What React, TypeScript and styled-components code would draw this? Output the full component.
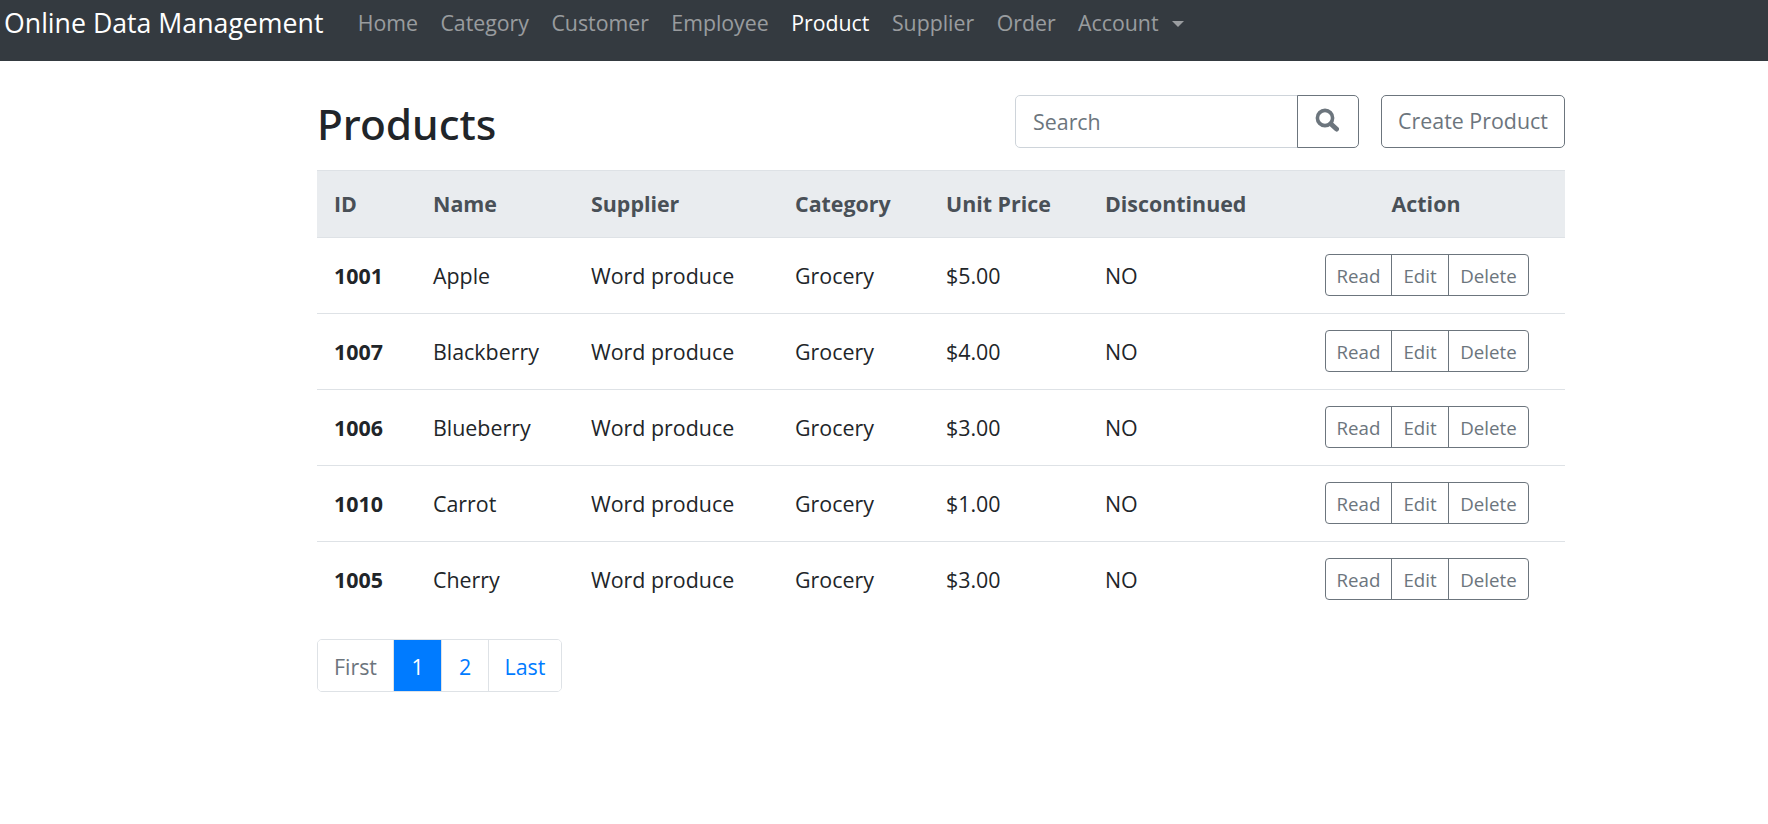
import React from 'react';
import styled, { createGlobalStyle } from 'styled-components';

const Global = createGlobalStyle`
  html, body { margin: 0; padding: 0; background: #fff; }
  body { font-family: "Open Sans", "Noto Sans", sans-serif; font-size: 21.4px; color: #212529; }
  * { box-sizing: border-box; }
`;

const NavBar = styled.nav`
  height: 61px;
  background: #343a40;
  display: flex;
  align-items: flex-start;
  padding-left: 4px;
`;

const Brand = styled.a`
  color: #fff;
  font-size: 26.7px;
  line-height: 45px;
  margin-right: 23px;
`;

const NavItem = styled.a<{ $active?: boolean }>`
  color: ${p => p.$active ? '#fff' : 'rgba(255,255,255,.5)'};
  font-size: 21.3px;
  line-height: 45px;
  padding: 0 11.25px;
`;

const Caret = styled.span`
  display: inline-block;
  margin-left: 13px;
  vertical-align: 4px;
  border-top: 6.5px solid;
  border-left: 6.5px solid transparent;
  border-right: 6.5px solid transparent;
`;

const Page = styled.main`
  width: 1248px;
  margin-left: 317px;
  padding-top: 34px;
`;

const Head = styled.div`
  display: flex;
  align-items: flex-start;
  justify-content: space-between;
  height: 75px;
`;

const Title = styled.h1`
  margin: 0;
  font-family: "Noto Sans", sans-serif;
  font-size: 42.4px;
  font-weight: 500;
  line-height: 58px;
`;

const Tools = styled.div`
  display: flex;
  gap: 22px;
`;

const SearchGroup = styled.div`
  display: flex;
  height: 53px;
`;

const SearchBox = styled.div`
  width: 283px;
  border: 1px solid #ced4da;
  border-radius: 5px 0 0 5px;
  color: #6c757d;
  padding: 0 17px;
  line-height: 51px;
`;

const SearchBtn = styled.button`
  width: 62px;
  border: 1px solid #6c757d;
  border-radius: 0 5px 5px 0;
  background: #fff;
  color: #6c757d;
  margin-left: -1px;
  padding: 0 2px 4px 0;
  display: flex;
  align-items: center;
  justify-content: center;
`;

const CreateBtn = styled.button`
  height: 53px;
  width: 184px;
  padding: 0 0 2px;
  border: 1px solid #6c757d;
  border-radius: 5px;
  background: #fff;
  color: #6c757d;
  font: inherit;
`;

const Table = styled.table`
  width: 100%;
  border-collapse: collapse;
  table-layout: fixed;
`;

const Th = styled.th<{ $center?: boolean; $width: number }>`
  width: ${p => p.$width}px;
  background: #e9ecef;
  color: #495057;
  font-weight: 700;
  height: 67px;
  text-align: ${p => p.$center ? 'center' : 'left'};
  padding: 0 17px 2px;
  border-top: 1px solid #dee2e6;
  border-bottom: 1px solid #dee2e6;
`;

const Td = styled.td<{ $bold?: boolean }>`
  height: 76px;
  padding: 0 17px;
  font-weight: ${p => p.$bold ? 700 : 400};
  border-top: 1px solid #dee2e6;
`;

const ActionCell = styled(Td)`
  padding: 0 0 0 2px;
  text-align: center;
`;

const BtnGroup = styled.div`
  display: inline-flex;
  vertical-align: middle;
  height: 42px;
  margin-top: -2px;
  border: 1px solid #6c757d;
  border-radius: 4px;
`;

const SmallBtn = styled.span<{ $width: number }>`
  width: ${p => p.$width}px;
  font-size: 18.7px;
  color: #6c757d;
  line-height: 42px;
  text-align: center;
  & + & { border-left: 1px solid #6c757d; }
`;

const Pager = styled.div`
  display: inline-flex;
  margin-top: 21px;
  height: 53px;
  border: 1px solid #dee2e6;
  border-radius: 5px;
  overflow: hidden;
`;

const PageLink = styled.a<{ $active?: boolean; $muted?: boolean; $width: number }>`
  width: ${p => p.$width}px;
  text-align: center;
  line-height: 53px;
  color: ${p => p.$active ? '#fff' : p.$muted ? '#6c757d' : '#007bff'};
  background: ${p => p.$active ? '#007bff' : '#fff'};
  & + & { border-left: 1px solid #dee2e6; }
`;

const products = [
  ['1001', 'Apple', '$5.00'],
  ['1007', 'Blackberry', '$4.00'],
  ['1006', 'Blueberry', '$3.00'],
  ['1010', 'Carrot', '$1.00'],
  ['1005', 'Cherry', '$3.00'],
];

const App: React.FC = () => (
  <>
    <Global />
    <NavBar>
      <Brand>Online Data Management</Brand>
      {['Home', 'Category', 'Customer', 'Employee'].map(n => <NavItem key={n}>{n}</NavItem>)}
      <NavItem $active>Product</NavItem>
      <NavItem>Supplier</NavItem>
      <NavItem>Order</NavItem>
      <NavItem>Account<Caret /></NavItem>
    </NavBar>
    <Page>
      <Head>
        <Title>Products</Title>
        <Tools>
          <SearchGroup>
            <SearchBox>Search</SearchBox>
            <SearchBtn>
              <svg width="24" height="24" viewBox="0 0 24 24" fill="none" stroke="currentColor">
                <circle cx="10" cy="10" r="7.6" strokeWidth="3.6" />
                <path d="M16 16l5.5 5" strokeWidth="5" strokeLinecap="round" />
              </svg>
            </SearchBtn>
          </SearchGroup>
          <CreateBtn>Create Product</CreateBtn>
        </Tools>
      </Head>
      <Table>
        <thead>
          <tr>
            <Th $width={99}>ID</Th>
            <Th $width={158}>Name</Th>
            <Th $width={204}>Supplier</Th>
            <Th $width={151}>Category</Th>
            <Th $width={159}>Unit Price</Th>
            <Th $width={199}>Discontinued</Th>
            <Th $width={278} $center>Action</Th>
          </tr>
        </thead>
        <tbody>
          {products.map(([id, name, price]) => (
            <tr key={id}>
              <Td $bold>{id}</Td>
              <Td>{name}</Td>
              <Td>Word produce</Td>
              <Td>Grocery</Td>
              <Td>{price}</Td>
              <Td>NO</Td>
              <ActionCell>
                <BtnGroup>
                  <SmallBtn $width={65}>Read</SmallBtn>
                  <SmallBtn $width={57}>Edit</SmallBtn>
                  <SmallBtn $width={80}>Delete</SmallBtn>
                </BtnGroup>
              </ActionCell>
            </tr>
          ))}
        </tbody>
      </Table>
      <Pager>
        <PageLink $muted $width={75}>First</PageLink>
        <PageLink $active $width={48}>1</PageLink>
        <PageLink $width={47}>2</PageLink>
        <PageLink $width={73}>Last</PageLink>
      </Pager>
    </Page>
  </>
);

export default App;
